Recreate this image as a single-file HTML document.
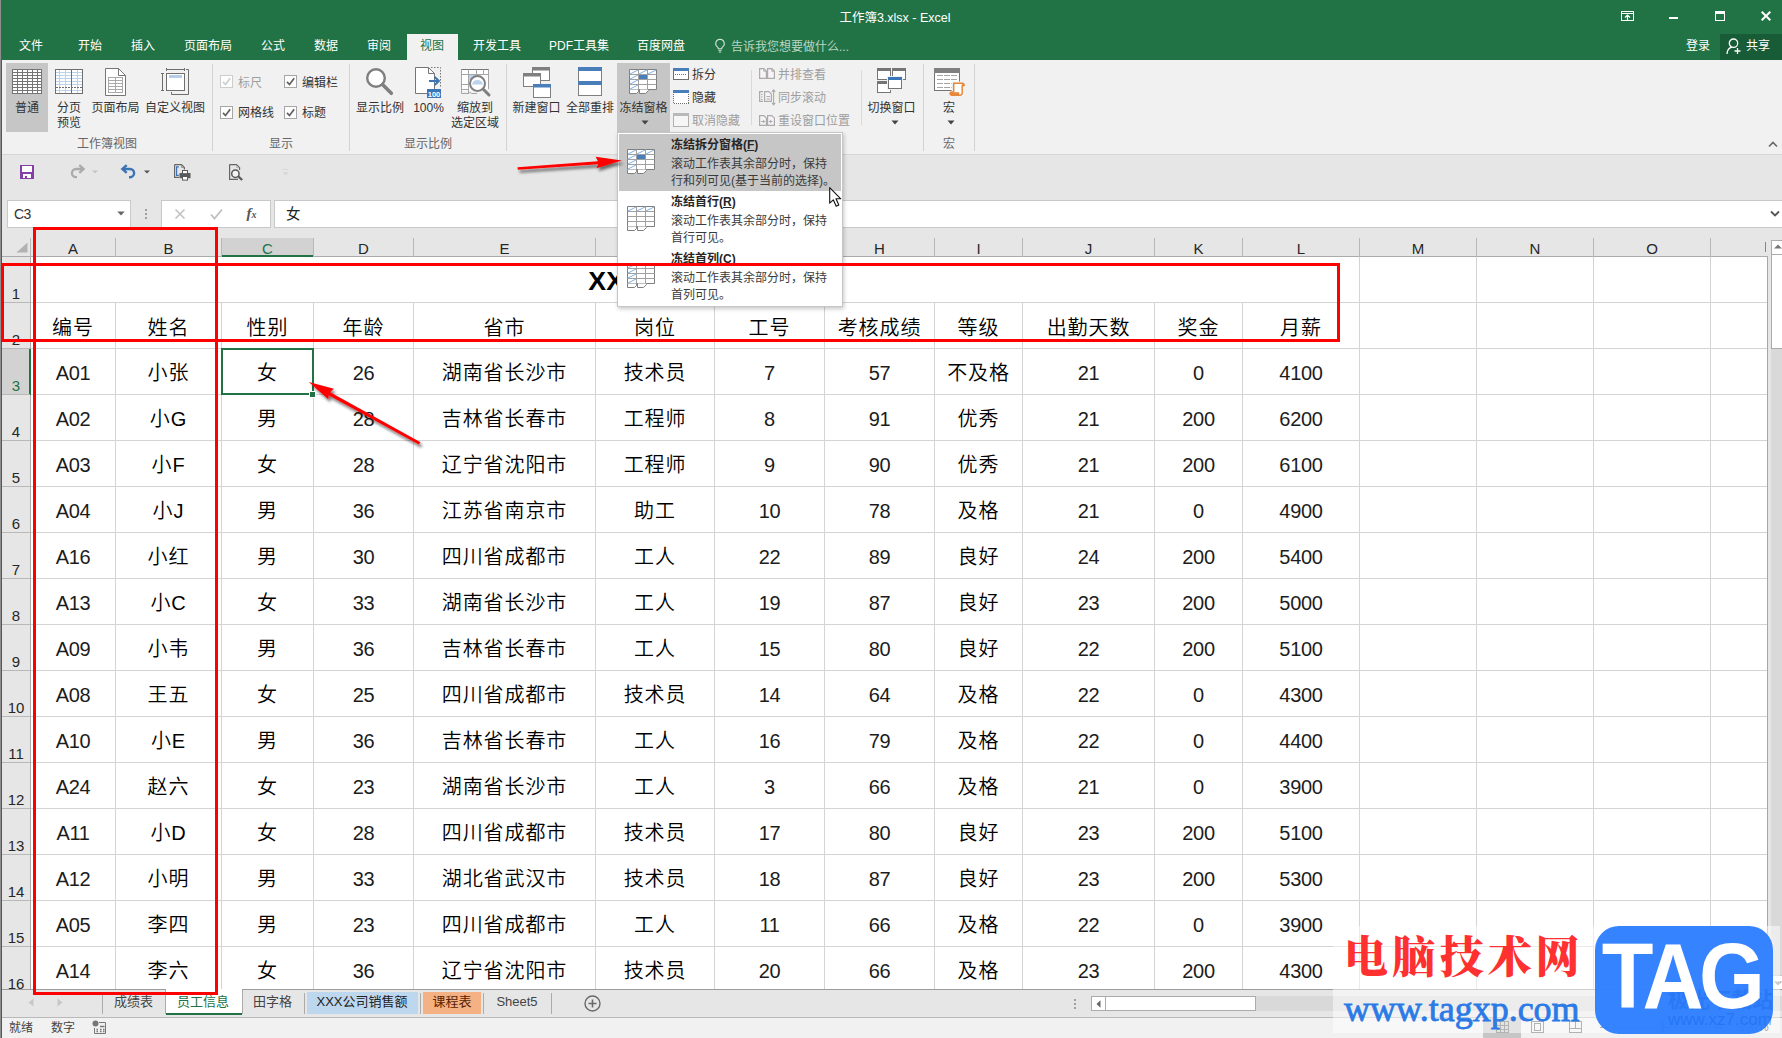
<!DOCTYPE html>
<html lang="zh-CN"><head><meta charset="utf-8"><title>Excel</title><style>
html,body{margin:0;padding:0}
body{width:1782px;height:1038px;overflow:hidden;position:relative;background:#e6e6e6;font-family:"Liberation Sans","Noto Sans CJK SC",sans-serif;font-size:12px;color:#333}
div,span,svg{position:absolute;box-sizing:border-box}
svg{overflow:visible}
.t{white-space:nowrap;line-height:16px;height:16px}
.c{text-align:center}
.w{color:#fff}
.g{color:#666}
.dis{color:#9e9e9e}
.tab{font-size:12px;color:#fff;top:37px;line-height:17px;height:17px;white-space:nowrap;text-align:center;width:100px}
.rl{font-size:12px;color:#333;white-space:nowrap;text-align:center;width:120px;line-height:15px}
.gl{font-size:12px;color:#666;white-space:nowrap;text-align:center;width:120px;line-height:15px;top:136px}
.vsep{width:1px;background:#d2d2d2;top:64px;height:87px}
.ssep{width:1px;background:#dcdcdc;top:70px;height:55px}
.cb{width:13px;height:13px;border:1px solid #8a8a8a;background:#fdfdfd}
.cbd{border-color:#c8c8c8}
.ch{font-family:"Liberation Sans","Noto Sans CJK SC",sans-serif;font-size:15px;color:#262626;text-align:center;line-height:18px;height:18px;top:239px;white-space:nowrap}
.rh{font-family:"Liberation Sans","Noto Sans CJK SC",sans-serif;font-size:15px;color:#262626;text-align:center;width:28px;left:2px;line-height:16px;height:16px;white-space:nowrap}
.cell{font-family:"Liberation Sans","Noto Sans CJK SC",sans-serif;font-size:20px;font-weight:350;color:#000;text-align:center;line-height:46px;height:46px;white-space:nowrap;letter-spacing:0.9px}
.num{letter-spacing:-0.3px;color:#1c1c1c}
.hl{height:1px;background:#d4d4d4;left:31px;width:1737px}
.vl{width:1px;background:#d4d4d4;top:257px}
.st{font-size:13px;color:#444;white-space:nowrap;line-height:16px;top:993px}
</style></head><body>
<div style="left:0px;top:0px;width:1782px;height:60px;background:#217346;"></div>
<div class="t c w" style="left:745px;top:10px;width:300px;line-height:16px;height:16px;font-size:12.5px">工作簿3.xlsx - Excel</div>
<svg style="left:1621px;top:11px" width="13" height="10" viewBox="0 0 13 10"><rect x="0.5" y="0.5" width="12" height="9" fill="none" stroke="#fff"/><path d="M0 2.5H13" stroke="#fff"/><path d="M6.5 9V4.5M4 6.5L6.5 4L9 6.5" stroke="#fff" fill="none" stroke-width="1.2"/></svg>
<div style="left:1669px;top:17px;width:9px;height:2px;background:#fff;"></div>
<svg style="left:1715px;top:11px" width="10" height="10" viewBox="0 0 10 10"><rect x="0.5" y="0.5" width="9" height="9" fill="none" stroke="#fff"/><rect x="0" y="0" width="10" height="3" fill="#fff"/></svg>
<svg style="left:1761px;top:11px" width="10" height="10" viewBox="0 0 10 10"><path d="M0.7 0.7L9.3 9.3M9.3 0.7L0.7 9.3" stroke="#fff" stroke-width="2"/></svg>
<div class="tab" style="left:-19px;top:38px;width:100px;line-height:17px;height:17px;">文件</div>
<div class="tab" style="left:40px;top:38px;width:100px;line-height:17px;height:17px;">开始</div>
<div class="tab" style="left:93px;top:38px;width:100px;line-height:17px;height:17px;">插入</div>
<div class="tab" style="left:158px;top:38px;width:100px;line-height:17px;height:17px;">页面布局</div>
<div class="tab" style="left:223px;top:38px;width:100px;line-height:17px;height:17px;">公式</div>
<div class="tab" style="left:276px;top:38px;width:100px;line-height:17px;height:17px;">数据</div>
<div class="tab" style="left:329px;top:38px;width:100px;line-height:17px;height:17px;">审阅</div>
<div style="left:407px;top:34px;width:51px;height:26px;background:#f1f1f1;"></div>
<div class="tab" style="left:382px;top:38px;width:100px;line-height:17px;height:17px;color:#217346">视图</div>
<div class="tab" style="left:447px;top:38px;width:100px;line-height:17px;height:17px;">开发工具</div>
<div class="tab" style="left:529px;top:38px;width:100px;line-height:17px;height:17px;">PDF工具集</div>
<div class="tab" style="left:611px;top:38px;width:100px;line-height:17px;height:17px;">百度网盘</div>
<svg style="left:714px;top:38px" width="12" height="16" viewBox="0 0 12 16"><path d="M6 1.2a4.3 4.3 0 0 0-2.6 7.7c.6.5.9 1.1.9 1.9h3.4c0-.8.3-1.4.9-1.9A4.3 4.3 0 0 0 6 1.2z" fill="none" stroke="#cfe3d6" stroke-width="1.1"/><path d="M4.4 12.3h3.2M4.8 14h2.4" stroke="#cfe3d6" stroke-width="1.1"/></svg>
<div class="t" style="left:731px;top:38.5px;line-height:17px;height:17px;color:#b9d5c3;font-size:12px">告诉我您想要做什么...</div>
<div class="t c w" style="left:1668px;top:38px;width:60px;line-height:16px;height:16px;">登录</div>
<div style="left:1720px;top:34px;width:62px;height:26px;background:#185c37;"></div>
<svg style="left:1726px;top:38px" width="17" height="17" viewBox="0 0 17 17"><circle cx="7.5" cy="5.2" r="4.2" fill="none" stroke="#fff" stroke-width="1.3"/><path d="M1 16c.3-4 2.5-6.3 5-6.8" fill="none" stroke="#fff" stroke-width="1.3"/><path d="M11.5 10v6M8.5 13h6" stroke="#fff" stroke-width="1.3"/></svg>
<div class="t c w" style="left:1738px;top:37.5px;width:40px;line-height:16px;height:16px;">共享</div>
<div style="left:0px;top:60px;width:1782px;height:94px;background:#f1f1f1;"></div>
<div style="left:0px;top:154px;width:1782px;height:1px;background:#d6d6d6;"></div>
<div style="left:6px;top:63px;width:42px;height:69px;background:#c6c6c6;"></div>
<svg style="left:12px;top:69px" width="30" height="25" viewBox="0 0 30 25"><g shape-rendering="crispEdges"><rect x="0" y="0" width="30" height="25" fill="#757575"/><rect x="1" y="1" width="4" height="2" fill="#fff"/><rect x="1" y="4" width="4" height="2" fill="#fff"/><rect x="1" y="7" width="4" height="2" fill="#fff"/><rect x="1" y="10" width="4" height="2" fill="#fff"/><rect x="1" y="13" width="4" height="2" fill="#fff"/><rect x="1" y="16" width="4" height="2" fill="#fff"/><rect x="1" y="19" width="4" height="2" fill="#fff"/><rect x="1" y="22" width="4" height="2" fill="#fff"/><rect x="6" y="1" width="4" height="2" fill="#fff"/><rect x="6" y="4" width="4" height="2" fill="#fff"/><rect x="6" y="7" width="4" height="2" fill="#fff"/><rect x="6" y="10" width="4" height="2" fill="#fff"/><rect x="6" y="13" width="4" height="2" fill="#fff"/><rect x="6" y="16" width="4" height="2" fill="#fff"/><rect x="6" y="19" width="4" height="2" fill="#fff"/><rect x="6" y="22" width="4" height="2" fill="#fff"/><rect x="11" y="1" width="4" height="2" fill="#fff"/><rect x="11" y="4" width="4" height="2" fill="#fff"/><rect x="11" y="7" width="4" height="2" fill="#fff"/><rect x="11" y="10" width="4" height="2" fill="#fff"/><rect x="11" y="13" width="4" height="2" fill="#fff"/><rect x="11" y="16" width="4" height="2" fill="#fff"/><rect x="11" y="19" width="4" height="2" fill="#fff"/><rect x="11" y="22" width="4" height="2" fill="#fff"/><rect x="16" y="1" width="4" height="2" fill="#fff"/><rect x="16" y="4" width="4" height="2" fill="#fff"/><rect x="16" y="7" width="4" height="2" fill="#fff"/><rect x="16" y="10" width="4" height="2" fill="#fff"/><rect x="16" y="13" width="4" height="2" fill="#fff"/><rect x="16" y="16" width="4" height="2" fill="#fff"/><rect x="16" y="19" width="4" height="2" fill="#fff"/><rect x="16" y="22" width="4" height="2" fill="#fff"/><rect x="21" y="1" width="4" height="2" fill="#fff"/><rect x="21" y="4" width="4" height="2" fill="#fff"/><rect x="21" y="7" width="4" height="2" fill="#fff"/><rect x="21" y="10" width="4" height="2" fill="#fff"/><rect x="21" y="13" width="4" height="2" fill="#fff"/><rect x="21" y="16" width="4" height="2" fill="#fff"/><rect x="21" y="19" width="4" height="2" fill="#fff"/><rect x="21" y="22" width="4" height="2" fill="#fff"/><rect x="26" y="1" width="3" height="2" fill="#fff"/><rect x="26" y="4" width="3" height="2" fill="#fff"/><rect x="26" y="7" width="3" height="2" fill="#fff"/><rect x="26" y="10" width="3" height="2" fill="#fff"/><rect x="26" y="13" width="3" height="2" fill="#fff"/><rect x="26" y="16" width="3" height="2" fill="#fff"/><rect x="26" y="19" width="3" height="2" fill="#fff"/><rect x="26" y="22" width="3" height="2" fill="#fff"/></g></svg>
<svg style="left:55px;top:69px" width="28" height="25" viewBox="0 0 28 25"><g shape-rendering="crispEdges"><rect x="0" y="0" width="28" height="25" fill="#6e6e6e"/><rect x="1" y="1" width="26" height="23" fill="#fff"/><rect x="4" y="1" width="1" height="23" fill="#bdd3ec"/><rect x="10" y="1" width="1" height="23" fill="#bdd3ec"/><rect x="22" y="1" width="1" height="23" fill="#bdd3ec"/><rect x="1" y="3" width="26" height="1" fill="#bdd3ec"/><rect x="1" y="6" width="26" height="1" fill="#bdd3ec"/><rect x="1" y="9" width="26" height="1" fill="#bdd3ec"/><rect x="1" y="12" width="26" height="1" fill="#bdd3ec"/><rect x="1" y="15" width="26" height="1" fill="#bdd3ec"/><rect x="1" y="21" width="26" height="1" fill="#bdd3ec"/><rect x="16" y="1" width="1" height="23" fill="#6e6e6e"/><rect x="1" y="18" width="2" height="1" fill="#6e6e6e"/><rect x="4" y="18" width="2" height="1" fill="#6e6e6e"/><rect x="7" y="18" width="2" height="1" fill="#6e6e6e"/><rect x="10" y="18" width="2" height="1" fill="#6e6e6e"/><rect x="13" y="18" width="2" height="1" fill="#6e6e6e"/><rect x="16" y="18" width="2" height="1" fill="#6e6e6e"/><rect x="19" y="18" width="2" height="1" fill="#6e6e6e"/><rect x="22" y="18" width="2" height="1" fill="#6e6e6e"/><rect x="25" y="18" width="2" height="1" fill="#6e6e6e"/></g></svg>
<svg style="left:105px;top:68px" width="21" height="28" viewBox="0 0 21 28"><path d="M0.5 0.5H13.5L20.5 7.5V27.5H0.5Z" fill="#fff" stroke="#757575"/><path d="M13.5 0.5V7.5H20.5" fill="none" stroke="#757575"/><g shape-rendering="crispEdges"><rect x="3" y="9" width="15" height="16" fill="#a9a9a9"/><rect x="4" y="10" width="6" height="2" fill="#fff"/><rect x="4" y="13" width="6" height="2" fill="#fff"/><rect x="4" y="16" width="6" height="2" fill="#fff"/><rect x="4" y="19" width="6" height="2" fill="#fff"/><rect x="4" y="22" width="6" height="2" fill="#fff"/><rect x="11" y="10" width="6" height="2" fill="#fff"/><rect x="11" y="13" width="6" height="2" fill="#fff"/><rect x="11" y="16" width="6" height="2" fill="#fff"/><rect x="11" y="19" width="6" height="2" fill="#fff"/><rect x="11" y="22" width="6" height="2" fill="#fff"/></g></svg>
<svg style="left:161px;top:68px" width="28" height="27" viewBox="0 0 28 27"><rect x="5.5" y="5.5" width="18" height="17" fill="#fff" stroke="#6e6e6e"/><rect x="8" y="7" width="13" height="3" fill="#b7cce6"/><path d="M5.5 1.5H23.5M5.5 0V3M23.5 0V3" stroke="#6e6e6e" fill="none"/><path d="M1.5 5.5V22.5M0 5.5H3M0 22.5H3" stroke="#6e6e6e" fill="none"/><path d="M25 1.5H27.5V26.5H10.5V24" stroke="#6e6e6e" fill="none"/></svg>
<div class="rl" style="left:-33px;top:101.3px;width:120px;line-height:15px;height:15px;">普通</div>
<div class="rl" style="left:9px;top:101.3px;width:120px;line-height:15px;height:15px;">分页</div>
<div class="rl" style="left:9px;top:116.3px;width:120px;line-height:15px;height:15px;">预览</div>
<div class="rl" style="left:55.5px;top:101.3px;width:120px;line-height:15px;height:15px;">页面布局</div>
<div class="rl" style="left:115px;top:101.3px;width:120px;line-height:15px;height:15px;">自定义视图</div>
<div class="gl" style="left:47px;top:136.7px;width:120px;line-height:15px;height:15px;">工作簿视图</div>
<div style="left:212px;top:64px;width:1px;height:87px;background:#d2d2d2;"></div>
<div class="cb" style="left:220px;top:75px;border-color:#cdcdcd"></div>
<svg style="left:220px;top:75px" width="13" height="13" viewBox="0 0 13 13"><path d="M3 6.8L5.5 9.5L10.2 3.3" fill="none" stroke="#cfcfcf" stroke-width="1.7"/></svg>
<div class="cb" style="left:284px;top:75px;border-color:#a6a6a6"></div>
<svg style="left:284px;top:75px" width="13" height="13" viewBox="0 0 13 13"><path d="M3 6.8L5.5 9.5L10.2 3.3" fill="none" stroke="#606060" stroke-width="1.7"/></svg>
<div class="cb" style="left:220px;top:106px;border-color:#a6a6a6"></div>
<svg style="left:220px;top:106px" width="13" height="13" viewBox="0 0 13 13"><path d="M3 6.8L5.5 9.5L10.2 3.3" fill="none" stroke="#606060" stroke-width="1.7"/></svg>
<div class="cb" style="left:284px;top:106px;border-color:#a6a6a6"></div>
<svg style="left:284px;top:106px" width="13" height="13" viewBox="0 0 13 13"><path d="M3 6.8L5.5 9.5L10.2 3.3" fill="none" stroke="#606060" stroke-width="1.7"/></svg>
<div class="t dis" style="left:238px;top:74.5px;line-height:16px;height:16px;">标尺</div>
<div class="t" style="left:302px;top:74.5px;line-height:16px;height:16px;">编辑栏</div>
<div class="t" style="left:238px;top:105px;line-height:16px;height:16px;">网格线</div>
<div class="t" style="left:302px;top:105px;line-height:16px;height:16px;">标题</div>
<div class="gl" style="left:221px;top:136.7px;width:120px;line-height:15px;height:15px;">显示</div>
<div style="left:349px;top:64px;width:1px;height:87px;background:#d2d2d2;"></div>
<svg style="left:365px;top:67px" width="29" height="29" viewBox="0 0 29 29"><circle cx="11" cy="11" r="8.8" fill="#fff" stroke="#7f7f7f" stroke-width="2.4"/><path d="M17.8 17.8L26.3 26.3" stroke="#7f7f7f" stroke-width="3.6" stroke-linecap="round"/></svg>
<svg style="left:414px;top:67px" width="28" height="32" viewBox="0 0 28 32"><path d="M1.5 0.5H14.5L20.5 6.5V26.5H1.5Z" fill="#fff" stroke="#757575"/><path d="M14.5 0.5V6.5H20.5" fill="none" stroke="#757575"/><path d="M17 0.5H26.5V20" fill="none" stroke="#757575" stroke-dasharray="1.5 1.5"/><path d="M20.5 19V22" stroke="#757575" stroke-dasharray="1.5 1.5"/><path d="M15 14H24.5M20.7 10L24.9 14L20.7 18" fill="none" stroke="#3a75b8" stroke-width="2"/><rect x="13" y="22" width="14" height="9" fill="#3a75b8"/><text x="20" y="29.6" font-family="Liberation Sans,sans-serif" font-size="7.5" font-weight="bold" fill="#fff" text-anchor="middle">100</text></svg>
<svg style="left:461px;top:69px" width="31" height="28" viewBox="0 0 31 28"><path d="M0.5 22V0.5H27.5V20" fill="#fff" stroke="#a6a6a6"/><path d="M0.5 0.5H27.5" stroke="#757575"/><path d="M7.5 0.5V24M15.5 0.5V6M22.5 0.5V6M0.5 5.5H27.5M0.5 15.5H8M0.5 20.5H8" fill="none" stroke="#a6a6a6"/><rect x="8" y="6" width="7" height="5" fill="#bdd3ec"/><path d="M0.5 22V24.5H8l1.2-1.4l1.2 1.4H16" fill="none" stroke="#a6a6a6"/><circle cx="16.5" cy="14.5" r="7.5" fill="#fff" stroke="#7f7f7f" stroke-width="2"/><path d="M11 15.5a5.6 5.6 0 0 1 11 0z" fill="#bdd3ec"/><path d="M22.3 20.3L28 26" stroke="#7f7f7f" stroke-width="3" stroke-linecap="round"/></svg>
<div class="rl" style="left:320px;top:101.3px;width:120px;line-height:15px;height:15px;">显示比例</div>
<div class="rl" style="left:368.5px;top:101.3px;width:120px;line-height:15px;height:15px;">100%</div>
<div class="rl" style="left:415px;top:101.3px;width:120px;line-height:15px;height:15px;">缩放到</div>
<div class="rl" style="left:415px;top:116.3px;width:120px;line-height:15px;height:15px;">选定区域</div>
<div class="gl" style="left:368px;top:136.7px;width:120px;line-height:15px;height:15px;">显示比例</div>
<div style="left:506px;top:64px;width:1px;height:87px;background:#d2d2d2;"></div>
<svg style="left:523px;top:67px" width="28" height="31" viewBox="0 0 28 31"><rect x="9.5" y="0.5" width="17" height="13" fill="#fff" stroke="#7f7f7f"/><rect x="9" y="0" width="18" height="3.5" fill="#7f7f7f"/><rect x="0.5" y="6.5" width="17" height="13" fill="#fff" stroke="#7f7f7f"/><rect x="0" y="6" width="18" height="3.5" fill="#7f7f7f"/><rect x="10.5" y="17.5" width="17" height="13" fill="#fff" stroke="#7f7f7f"/><rect x="10" y="17" width="18" height="3.5" fill="#4a7ebb"/></svg>
<svg style="left:578px;top:67px" width="24" height="29" viewBox="0 0 24 29"><rect x="0.5" y="0.5" width="23" height="28" fill="#fff" stroke="#7f7f7f"/><rect x="0" y="0" width="24" height="4" fill="#4a7ebb"/><rect x="0" y="14" width="24" height="4" fill="#4a7ebb"/></svg>
<div style="left:617px;top:63px;width:53px;height:70px;background:#c6c6c6;"></div>
<svg style="left:629px;top:69px" width="28" height="25" viewBox="0 0 28 25"><path d="M0.5 0.5H27.5V20.5H0.5Z" fill="#fff" stroke="#7f7f7f"/><path d="M0.5 20.5V24.5H7.5L9.5 22.5V20.5M10.5 20.5V24.5H16.5L19.5 21.5V20.5" fill="#fff" stroke="#7f7f7f"/><path d="M9.5 0.5V20.5M18.5 0.5V20.5M0.5 5.5H27.5M0.5 10.5H27.5M0.5 15.5H27.5" stroke="#a0a0a0" fill="none"/><path d="M1 5L9 1" stroke="#7fb0e0" stroke-width="1"/><path d="M10 5L18 1" stroke="#7fb0e0" stroke-width="1"/><path d="M19 5L27 1" stroke="#7fb0e0" stroke-width="1"/><path d="M1 10L9 6" stroke="#7fb0e0" stroke-width="1"/><path d="M1 15L9 11" stroke="#7fb0e0" stroke-width="1"/><path d="M1 20L9 16" stroke="#7fb0e0" stroke-width="1"/><rect x="10" y="6" width="8" height="4" fill="#4a7ebb"/></svg>
<div class="rl" style="left:476.5px;top:101.3px;width:120px;line-height:15px;height:15px;">新建窗口</div>
<div class="rl" style="left:530px;top:101.3px;width:120px;line-height:15px;height:15px;">全部重排</div>
<div class="rl" style="left:583.5px;top:101.3px;width:120px;line-height:15px;height:15px;">冻结窗格</div>
<svg style="left:641px;top:120px" width="8" height="5" viewBox="0 0 8 5"><path d="M0.5 0.5H7.5L4 4.5Z" fill="#444"/></svg>
<svg style="left:673px;top:68px" width="16" height="12" viewBox="0 0 16 12"><g shape-rendering="crispEdges"><rect x="0.5" y="0.5" width="15" height="11" fill="#fff" stroke="#6e6e6e"/><rect x="0" y="0" width="16" height="3" fill="#4a7ebb"/><path d="M2 6.5H14" stroke="#4a7ebb" stroke-dasharray="1 1"/></g></svg>
<svg style="left:673px;top:90px" width="16" height="14" viewBox="0 0 16 14"><g shape-rendering="crispEdges"><rect x="0.5" y="0.5" width="15" height="13" fill="#fff" stroke="#6e6e6e" stroke-dasharray="1 1"/><rect x="0" y="0" width="16" height="3" fill="#4a7ebb"/></g></svg>
<svg style="left:673px;top:113px" width="16" height="14" viewBox="0 0 16 14"><rect x="0.5" y="0.5" width="15" height="13" fill="#f6f6f6" stroke="#b0b0b0"/><rect x="0" y="0" width="16" height="3" fill="#b8b8b8"/></svg>
<div class="t" style="left:692px;top:67px;line-height:16px;height:16px;">拆分</div>
<div class="t" style="left:692px;top:89.5px;line-height:16px;height:16px;">隐藏</div>
<div class="t dis" style="left:692px;top:112.5px;line-height:16px;height:16px;">取消隐藏</div>
<div style="left:751px;top:70px;width:1px;height:55px;background:#dadada;"></div>
<svg style="left:759px;top:68px" width="17" height="12" viewBox="0 0 17 12"><path d="M0.6 0.6H4.8L7.4 3.2V10.4H0.6ZM8.6 0.6H12.8L15.4 3.2V10.4H8.6Z" fill="#f7f3f7" stroke="#ababab" stroke-width="1.2"/><path d="M4.8 0.6V3.2H7.4M12.8 0.6V3.2H15.4" fill="none" stroke="#ababab" stroke-width="1"/></svg>
<svg style="left:759px;top:89px" width="17" height="17" viewBox="0 0 17 17"><path d="M4 2.6H0.6V12.4H4" fill="none" stroke="#ababab" stroke-width="1.2"/><path d="M2 5.5H3.5M2 8H3.5M2 10.5H3.5" stroke="#ababab"/><path d="M5.6 2.6H9.8L12.4 5.2V12.4H5.6Z" fill="#f7f3f7" stroke="#ababab" stroke-width="1.2"/><path d="M7.5 7.5H11M7.5 10H11" stroke="#ababab"/><path d="M14.6 1V15.5M13 2.8L14.6 0.8L16.2 2.8M13 13.8L14.6 15.8L16.2 13.8" fill="none" stroke="#ababab" stroke-width="1.1"/></svg>
<svg style="left:759px;top:115px" width="17" height="12" viewBox="0 0 17 12"><path d="M0.6 0.6H4.8L7.4 3.2V10.4H0.6ZM8.6 0.6H12.8L15.4 3.2V10.4H8.6Z" fill="#f7f3f7" stroke="#ababab" stroke-width="1.2"/><path d="M2 6.5H5.5M4 4.8L5.7 6.5L4 8.2M10 6.5H13.5M11.7 4.8V8.2" stroke="#ababab" fill="none"/></svg>
<div class="t dis" style="left:778px;top:67px;line-height:16px;height:16px;">并排查看</div>
<div class="t dis" style="left:778px;top:90px;line-height:16px;height:16px;">同步滚动</div>
<div class="t dis" style="left:778px;top:112.5px;line-height:16px;height:16px;">重设窗口位置</div>
<div style="left:861px;top:70px;width:1px;height:55px;background:#dadada;"></div>
<svg style="left:877px;top:68px" width="29" height="25" viewBox="0 0 29 25"><rect x="0.5" y="0.5" width="13" height="11" fill="#fff" stroke="#757575"/><rect x="0" y="0" width="14" height="3" fill="#757575"/><rect x="15.5" y="0.5" width="13" height="11" fill="#fff" stroke="#757575"/><rect x="15" y="0" width="14" height="3" fill="#757575"/><rect x="0.5" y="13.5" width="13" height="11" fill="#fff" stroke="#757575"/><rect x="0" y="13" width="14" height="3" fill="#757575"/><rect x="10" y="8" width="16" height="14" fill="#f1f1f1"/><rect x="11.5" y="9.5" width="13" height="11" fill="#fff" stroke="#757575"/><rect x="11" y="9" width="14" height="3" fill="#3a75b8"/></svg>
<div class="rl" style="left:831.5px;top:101.3px;width:120px;line-height:15px;height:15px;">切换窗口</div>
<svg style="left:890.5px;top:120px" width="8" height="5" viewBox="0 0 8 5"><path d="M0.5 0.5H7.5L4 4.5Z" fill="#444"/></svg>
<div style="left:923px;top:64px;width:1px;height:87px;background:#d2d2d2;"></div>
<svg style="left:934px;top:68px" width="32" height="29" viewBox="0 0 32 29"><rect x="0.5" y="0.5" width="25" height="22" fill="#fff" stroke="#757575"/><rect x="0" y="0" width="26" height="5" fill="#808080"/><path d="M3 7.5H9" stroke="#a6a6a6"/><path d="M10 7.5H16" stroke="#a6a6a6"/><path d="M17 7.5H23" stroke="#a6a6a6"/><path d="M3 11.5H9" stroke="#a6a6a6"/><path d="M10 11.5H16" stroke="#a6a6a6"/><path d="M17 11.5H23" stroke="#a6a6a6"/><path d="M3 15.5H9" stroke="#a6a6a6"/><path d="M10 15.5H16" stroke="#a6a6a6"/><path d="M17 15.5H23" stroke="#a6a6a6"/><path d="M3 19.5H9" stroke="#a6a6a6"/><path d="M10 19.5H16" stroke="#a6a6a6"/><path d="M17 19.5H23" stroke="#a6a6a6"/><path d="M17.5 13.5H31.5V18.5H30V28.5H15.5V23.5H17.5Z" fill="#f1f1f1"/><path d="M19.7 15.2H28.2a1.9 1.9 0 0 1 1.9 1.9V17.6H28.2V25a2.2 2.2 0 0 1-2.2 2.2H17.8a1.6 1.6 0 0 1 0-3.2H19.7Z" fill="#fff" stroke="#e8873a" stroke-width="1.5" stroke-linejoin="round"/><path d="M16.4 24.2H25.2V27H17.8a1.5 1.5 0 0 1-1.4-2.8Z" fill="#e8873a"/><path d="M28.2 15.2a1.9 1.9 0 0 1 1.9 1.9V17.6H28.2Z" fill="#e8873a"/></svg>
<div class="rl" style="left:889px;top:101.3px;width:120px;line-height:15px;height:15px;">宏</div>
<svg style="left:946.5px;top:120px" width="8" height="5" viewBox="0 0 8 5"><path d="M0.5 0.5H7.5L4 4.5Z" fill="#444"/></svg>
<div class="gl" style="left:889px;top:136.7px;width:120px;line-height:15px;height:15px;">宏</div>
<div style="left:974px;top:64px;width:1px;height:87px;background:#d2d2d2;"></div>
<svg style="left:1768px;top:141px" width="10" height="7" viewBox="0 0 10 7"><path d="M1 5.5L5 1.5L9 5.5" fill="none" stroke="#666" stroke-width="1.6"/></svg>
<svg style="left:20px;top:165px" width="14" height="14" viewBox="0 0 14 14"><g shape-rendering="crispEdges"><rect x="0" y="0" width="14" height="14" fill="#8540a8"/><rect x="2" y="1" width="10" height="6" fill="#fff"/><rect x="3" y="9" width="8" height="4" fill="#fff"/><rect x="5" y="11" width="2" height="2" fill="#8540a8"/></g></svg>
<svg style="left:70px;top:164px" width="15" height="14" viewBox="0 0 15 14"><path d="M9.3 1.2L13.6 5L9.3 8.8" fill="none" stroke="#ababab" stroke-width="2.3"/><path d="M13 5H6a4.1 4.1 0 0 0 0 8.2H7" fill="none" stroke="#ababab" stroke-width="2.3"/></svg>
<svg style="left:92px;top:170px" width="6" height="4" viewBox="0 0 6 4"><path d="M0 0.5H6L3 3.5Z" fill="#c4c4c4"/></svg>
<svg style="left:121px;top:164px" width="15" height="14" viewBox="0 0 15 14"><path d="M5.7 1.2L1.4 5L5.7 8.8" fill="none" stroke="#3b73b5" stroke-width="2.4"/><path d="M2 5H9a4.1 4.1 0 0 1 0 8.2H8" fill="none" stroke="#3b73b5" stroke-width="2.4"/></svg>
<svg style="left:143.5px;top:170px" width="6" height="4" viewBox="0 0 6 4"><path d="M0 0.5H6L3 3.5Z" fill="#555"/></svg>
<svg style="left:174px;top:164px" width="17" height="17" viewBox="0 0 17 17"><path d="M0.6 0.6H7.5L10.4 3.5V5.5M0.6 0.6V13.4H5" fill="none" stroke="#666" stroke-width="1.2"/><path d="M7.5 0.6V3.5H10.4" fill="none" stroke="#888" stroke-width="0.8"/><path d="M4.8 2.8H2.6V11.3H4.8" fill="none" stroke="#3b73b5" stroke-width="1.2"/><rect x="5.5" y="9" width="11" height="5.2" fill="#5a5a5a"/><rect x="8.5" y="6.5" width="5" height="3.2" fill="#fff" stroke="#5a5a5a"/><rect x="8.5" y="12.5" width="5" height="3.6" fill="#fff" stroke="#5a5a5a"/></svg>
<svg style="left:229px;top:164px" width="15" height="17" viewBox="0 0 15 17"><path d="M0.6 0.6H7.5L10.6 3.7V6M0.6 0.6V15.4H9" fill="none" stroke="#666" stroke-width="1.2"/><path d="M7.5 0.6V3.7H10.6" fill="none" stroke="#888" stroke-width="0.8" stroke-dasharray="1 1"/><circle cx="6.4" cy="9.7" r="3.7" fill="#f4f4f4" stroke="#5a5a5a" stroke-width="1.5"/><path d="M9.2 12.4L13.2 16" stroke="#5a5a5a" stroke-width="2.3"/></svg>
<svg style="left:282px;top:169px" width="7" height="8" viewBox="0 0 7 8"><path d="M0.5 0.5H6.5" stroke="#d8d8d8"/><path d="M0.5 3H6.5L3.5 6.5Z" fill="#d8d8d8"/></svg>
<div style="left:7px;top:200px;width:124px;height:28px;background:#fff;border:1px solid #c9c9c9"></div>
<div class="t" style="left:14px;top:205px;line-height:18px;height:18px;font-size:14px;color:#333;letter-spacing:-0.5px">C3</div>
<svg style="left:117px;top:211px" width="8" height="5" viewBox="0 0 8 5"><path d="M0.3 0.5H7.7L4 4.5Z" fill="#666"/></svg>
<div style="left:145px;top:209px;width:2px;height:2px;background:#a0a0a0;"></div>
<div style="left:145px;top:213px;width:2px;height:2px;background:#a0a0a0;"></div>
<div style="left:145px;top:217px;width:2px;height:2px;background:#a0a0a0;"></div>
<div style="left:161px;top:200px;width:110px;height:28px;background:#fff;border:1px solid #c9c9c9"></div>
<svg style="left:174px;top:208px" width="12" height="12" viewBox="0 0 12 12"><path d="M1.5 1.5L10.5 10.5M10.5 1.5L1.5 10.5" stroke="#c0c0c0" stroke-width="1.5"/></svg>
<svg style="left:210px;top:208px" width="13" height="12" viewBox="0 0 13 12"><path d="M1 6.5L4.5 10.5L12 1.5" fill="none" stroke="#c0c0c0" stroke-width="1.8"/></svg>
<div class="t" style="left:246.5px;top:204px;font-family:'Liberation Serif',serif;font-style:italic;font-weight:bold;font-size:15px;color:#555;line-height:18px;height:18px">f<span style="position:static;font-size:10px">x</span></div>
<div style="left:274px;top:200px;width:1510px;height:28px;background:#fff;border:1px solid #c9c9c9"></div>
<div class="t" style="left:286px;top:204.5px;line-height:18px;height:18px;font-size:14.5px;color:#222">女</div>
<svg style="left:1770px;top:210px" width="10" height="7" viewBox="0 0 10 7"><path d="M1 1.5L5 5.5L9 1.5" fill="none" stroke="#555" stroke-width="1.8"/></svg>
<div style="left:31px;top:257px;width:1736px;height:732px;background:#fff;"></div>
<div style="left:2px;top:256px;width:1766px;height:1px;background:#ababab;"></div>
<div style="left:30px;top:238px;width:1px;height:19px;background:#b8b8b8;"></div>
<div class="ch" style="left:53px;top:239.5px;width:40px;line-height:18px;height:18px;color:#262626">A</div>
<div style="left:115px;top:238px;width:1px;height:19px;background:#b8b8b8;"></div>
<div class="ch" style="left:148.5px;top:239.5px;width:40px;line-height:18px;height:18px;color:#262626">B</div>
<div style="left:222px;top:238px;width:91px;height:18px;background:#d2d2d2;"></div>
<div style="left:222px;top:255px;width:91px;height:2px;background:#217346;"></div>
<div style="left:221px;top:238px;width:1px;height:19px;background:#b8b8b8;"></div>
<div class="ch" style="left:247.5px;top:239.5px;width:40px;line-height:18px;height:18px;color:#217346">C</div>
<div style="left:313px;top:238px;width:1px;height:19px;background:#b8b8b8;"></div>
<div class="ch" style="left:343.5px;top:239.5px;width:40px;line-height:18px;height:18px;color:#262626">D</div>
<div style="left:413px;top:238px;width:1px;height:19px;background:#b8b8b8;"></div>
<div class="ch" style="left:484.5px;top:239.5px;width:40px;line-height:18px;height:18px;color:#262626">E</div>
<div style="left:595px;top:238px;width:1px;height:19px;background:#b8b8b8;"></div>
<div class="ch" style="left:635px;top:239.5px;width:40px;line-height:18px;height:18px;color:#262626">F</div>
<div style="left:714px;top:238px;width:1px;height:19px;background:#b8b8b8;"></div>
<div class="ch" style="left:749.5px;top:239.5px;width:40px;line-height:18px;height:18px;color:#262626">G</div>
<div style="left:824px;top:238px;width:1px;height:19px;background:#b8b8b8;"></div>
<div class="ch" style="left:859.5px;top:239.5px;width:40px;line-height:18px;height:18px;color:#262626">H</div>
<div style="left:934px;top:238px;width:1px;height:19px;background:#b8b8b8;"></div>
<div class="ch" style="left:958.5px;top:239.5px;width:40px;line-height:18px;height:18px;color:#262626">I</div>
<div style="left:1022px;top:238px;width:1px;height:19px;background:#b8b8b8;"></div>
<div class="ch" style="left:1068.5px;top:239.5px;width:40px;line-height:18px;height:18px;color:#262626">J</div>
<div style="left:1154px;top:238px;width:1px;height:19px;background:#b8b8b8;"></div>
<div class="ch" style="left:1178.5px;top:239.5px;width:40px;line-height:18px;height:18px;color:#262626">K</div>
<div style="left:1242px;top:238px;width:1px;height:19px;background:#b8b8b8;"></div>
<div class="ch" style="left:1281px;top:239.5px;width:40px;line-height:18px;height:18px;color:#262626">L</div>
<div style="left:1359px;top:238px;width:1px;height:19px;background:#b8b8b8;"></div>
<div class="ch" style="left:1398px;top:239.5px;width:40px;line-height:18px;height:18px;color:#262626">M</div>
<div style="left:1476px;top:238px;width:1px;height:19px;background:#b8b8b8;"></div>
<div class="ch" style="left:1515px;top:239.5px;width:40px;line-height:18px;height:18px;color:#262626">N</div>
<div style="left:1593px;top:238px;width:1px;height:19px;background:#b8b8b8;"></div>
<div class="ch" style="left:1632px;top:239.5px;width:40px;line-height:18px;height:18px;color:#262626">O</div>
<div style="left:1710px;top:238px;width:1px;height:19px;background:#b8b8b8;"></div>
<div style="left:1765px;top:242px;width:1px;height:10px;background:#c07a20;"></div>
<svg style="left:16px;top:242px" width="12" height="11" viewBox="0 0 12 11"><path d="M11.5 0.5V10.5H0.5Z" fill="#b2b2b2"/></svg>
<div style="left:30px;top:257px;width:1px;height:732px;background:#ababab;"></div>
<div style="left:2px;top:302px;width:28px;height:1px;background:#b8b8b8;"></div>
<div class="rh" style="top:286px;color:#262626">1</div>
<div style="left:2px;top:348px;width:28px;height:1px;background:#b8b8b8;"></div>
<div class="rh" style="top:332px;color:#262626">2</div>
<div style="left:2px;top:349px;width:28px;height:45px;background:#d2d2d2;"></div>
<div style="left:29px;top:349px;width:2px;height:46px;background:#217346;"></div>
<div style="left:2px;top:394px;width:28px;height:1px;background:#b8b8b8;"></div>
<div class="rh" style="top:378px;color:#217346">3</div>
<div style="left:2px;top:440px;width:28px;height:1px;background:#b8b8b8;"></div>
<div class="rh" style="top:424px;color:#262626">4</div>
<div style="left:2px;top:486px;width:28px;height:1px;background:#b8b8b8;"></div>
<div class="rh" style="top:470px;color:#262626">5</div>
<div style="left:2px;top:532px;width:28px;height:1px;background:#b8b8b8;"></div>
<div class="rh" style="top:516px;color:#262626">6</div>
<div style="left:2px;top:578px;width:28px;height:1px;background:#b8b8b8;"></div>
<div class="rh" style="top:562px;color:#262626">7</div>
<div style="left:2px;top:624px;width:28px;height:1px;background:#b8b8b8;"></div>
<div class="rh" style="top:608px;color:#262626">8</div>
<div style="left:2px;top:670px;width:28px;height:1px;background:#b8b8b8;"></div>
<div class="rh" style="top:654px;color:#262626">9</div>
<div style="left:2px;top:716px;width:28px;height:1px;background:#b8b8b8;"></div>
<div class="rh" style="top:700px;color:#262626">10</div>
<div style="left:2px;top:762px;width:28px;height:1px;background:#b8b8b8;"></div>
<div class="rh" style="top:746px;color:#262626">11</div>
<div style="left:2px;top:808px;width:28px;height:1px;background:#b8b8b8;"></div>
<div class="rh" style="top:792px;color:#262626">12</div>
<div style="left:2px;top:854px;width:28px;height:1px;background:#b8b8b8;"></div>
<div class="rh" style="top:838px;color:#262626">13</div>
<div style="left:2px;top:900px;width:28px;height:1px;background:#b8b8b8;"></div>
<div class="rh" style="top:884px;color:#262626">14</div>
<div style="left:2px;top:946px;width:28px;height:1px;background:#b8b8b8;"></div>
<div class="rh" style="top:930px;color:#262626">15</div>
<div style="left:2px;top:992px;width:28px;height:1px;background:#b8b8b8;"></div>
<div class="rh" style="top:976px;color:#262626">16</div>
<div style="left:31px;top:302px;width:1736px;height:1px;background:#d4d4d4;"></div>
<div style="left:31px;top:348px;width:1736px;height:1px;background:#d4d4d4;"></div>
<div style="left:31px;top:394px;width:1736px;height:1px;background:#d4d4d4;"></div>
<div style="left:31px;top:440px;width:1736px;height:1px;background:#d4d4d4;"></div>
<div style="left:31px;top:486px;width:1736px;height:1px;background:#d4d4d4;"></div>
<div style="left:31px;top:532px;width:1736px;height:1px;background:#d4d4d4;"></div>
<div style="left:31px;top:578px;width:1736px;height:1px;background:#d4d4d4;"></div>
<div style="left:31px;top:624px;width:1736px;height:1px;background:#d4d4d4;"></div>
<div style="left:31px;top:670px;width:1736px;height:1px;background:#d4d4d4;"></div>
<div style="left:31px;top:716px;width:1736px;height:1px;background:#d4d4d4;"></div>
<div style="left:31px;top:762px;width:1736px;height:1px;background:#d4d4d4;"></div>
<div style="left:31px;top:808px;width:1736px;height:1px;background:#d4d4d4;"></div>
<div style="left:31px;top:854px;width:1736px;height:1px;background:#d4d4d4;"></div>
<div style="left:31px;top:900px;width:1736px;height:1px;background:#d4d4d4;"></div>
<div style="left:31px;top:946px;width:1736px;height:1px;background:#d4d4d4;"></div>
<div style="left:115px;top:303px;width:1px;height:686px;background:#d4d4d4;"></div>
<div style="left:221px;top:303px;width:1px;height:686px;background:#d4d4d4;"></div>
<div style="left:313px;top:303px;width:1px;height:686px;background:#d4d4d4;"></div>
<div style="left:413px;top:303px;width:1px;height:686px;background:#d4d4d4;"></div>
<div style="left:595px;top:303px;width:1px;height:686px;background:#d4d4d4;"></div>
<div style="left:714px;top:303px;width:1px;height:686px;background:#d4d4d4;"></div>
<div style="left:824px;top:303px;width:1px;height:686px;background:#d4d4d4;"></div>
<div style="left:934px;top:303px;width:1px;height:686px;background:#d4d4d4;"></div>
<div style="left:1022px;top:303px;width:1px;height:686px;background:#d4d4d4;"></div>
<div style="left:1154px;top:303px;width:1px;height:686px;background:#d4d4d4;"></div>
<div style="left:1242px;top:303px;width:1px;height:686px;background:#d4d4d4;"></div>
<div style="left:1359px;top:257px;width:1px;height:732px;background:#d4d4d4;"></div>
<div style="left:1476px;top:257px;width:1px;height:732px;background:#d4d4d4;"></div>
<div style="left:1593px;top:257px;width:1px;height:732px;background:#d4d4d4;"></div>
<div style="left:1710px;top:257px;width:1px;height:732px;background:#d4d4d4;"></div>
<div style="left:1767px;top:257px;width:1px;height:732px;background:#a6a6a6;"></div>
<div class="cell" style="left:31px;top:258px;width:1328px;font-size:26.67px;font-weight:bold;color:#000;line-height:46px;letter-spacing:0">XXX公司员工信息</div>
<div class="cell" style="left:31px;top:305px;width:84px;">编号</div>
<div class="cell" style="left:116px;top:305px;width:105px;">姓名</div>
<div class="cell" style="left:222px;top:305px;width:91px;">性别</div>
<div class="cell" style="left:314px;top:305px;width:99px;">年龄</div>
<div class="cell" style="left:414px;top:305px;width:181px;">省市</div>
<div class="cell" style="left:596px;top:305px;width:118px;">岗位</div>
<div class="cell" style="left:715px;top:305px;width:109px;">工号</div>
<div class="cell" style="left:825px;top:305px;width:109px;">考核成绩</div>
<div class="cell" style="left:935px;top:305px;width:87px;">等级</div>
<div class="cell" style="left:1023px;top:305px;width:131px;">出勤天数</div>
<div class="cell" style="left:1155px;top:305px;width:87px;">奖金</div>
<div class="cell" style="left:1243px;top:305px;width:116px;">月薪</div>
<div class="cell num" style="left:31px;top:350px;width:84px;">A01</div>
<div class="cell" style="left:116px;top:350px;width:105px;">小张</div>
<div class="cell" style="left:222px;top:350px;width:91px;">女</div>
<div class="cell num" style="left:314px;top:350px;width:99px;">26</div>
<div class="cell" style="left:414px;top:350px;width:181px;">湖南省长沙市</div>
<div class="cell" style="left:596px;top:350px;width:118px;">技术员</div>
<div class="cell num" style="left:715px;top:350px;width:109px;">7</div>
<div class="cell num" style="left:825px;top:350px;width:109px;">57</div>
<div class="cell" style="left:935px;top:350px;width:87px;">不及格</div>
<div class="cell num" style="left:1023px;top:350px;width:131px;">21</div>
<div class="cell num" style="left:1155px;top:350px;width:87px;">0</div>
<div class="cell num" style="left:1243px;top:350px;width:116px;">4100</div>
<div class="cell num" style="left:31px;top:396px;width:84px;">A02</div>
<div class="cell" style="left:116px;top:396px;width:105px;">小G</div>
<div class="cell" style="left:222px;top:396px;width:91px;">男</div>
<div class="cell num" style="left:314px;top:396px;width:99px;">28</div>
<div class="cell" style="left:414px;top:396px;width:181px;">吉林省长春市</div>
<div class="cell" style="left:596px;top:396px;width:118px;">工程师</div>
<div class="cell num" style="left:715px;top:396px;width:109px;">8</div>
<div class="cell num" style="left:825px;top:396px;width:109px;">91</div>
<div class="cell" style="left:935px;top:396px;width:87px;">优秀</div>
<div class="cell num" style="left:1023px;top:396px;width:131px;">21</div>
<div class="cell num" style="left:1155px;top:396px;width:87px;">200</div>
<div class="cell num" style="left:1243px;top:396px;width:116px;">6200</div>
<div class="cell num" style="left:31px;top:442px;width:84px;">A03</div>
<div class="cell" style="left:116px;top:442px;width:105px;">小F</div>
<div class="cell" style="left:222px;top:442px;width:91px;">女</div>
<div class="cell num" style="left:314px;top:442px;width:99px;">28</div>
<div class="cell" style="left:414px;top:442px;width:181px;">辽宁省沈阳市</div>
<div class="cell" style="left:596px;top:442px;width:118px;">工程师</div>
<div class="cell num" style="left:715px;top:442px;width:109px;">9</div>
<div class="cell num" style="left:825px;top:442px;width:109px;">90</div>
<div class="cell" style="left:935px;top:442px;width:87px;">优秀</div>
<div class="cell num" style="left:1023px;top:442px;width:131px;">21</div>
<div class="cell num" style="left:1155px;top:442px;width:87px;">200</div>
<div class="cell num" style="left:1243px;top:442px;width:116px;">6100</div>
<div class="cell num" style="left:31px;top:488px;width:84px;">A04</div>
<div class="cell" style="left:116px;top:488px;width:105px;">小J</div>
<div class="cell" style="left:222px;top:488px;width:91px;">男</div>
<div class="cell num" style="left:314px;top:488px;width:99px;">36</div>
<div class="cell" style="left:414px;top:488px;width:181px;">江苏省南京市</div>
<div class="cell" style="left:596px;top:488px;width:118px;">助工</div>
<div class="cell num" style="left:715px;top:488px;width:109px;">10</div>
<div class="cell num" style="left:825px;top:488px;width:109px;">78</div>
<div class="cell" style="left:935px;top:488px;width:87px;">及格</div>
<div class="cell num" style="left:1023px;top:488px;width:131px;">21</div>
<div class="cell num" style="left:1155px;top:488px;width:87px;">0</div>
<div class="cell num" style="left:1243px;top:488px;width:116px;">4900</div>
<div class="cell num" style="left:31px;top:534px;width:84px;">A16</div>
<div class="cell" style="left:116px;top:534px;width:105px;">小红</div>
<div class="cell" style="left:222px;top:534px;width:91px;">男</div>
<div class="cell num" style="left:314px;top:534px;width:99px;">30</div>
<div class="cell" style="left:414px;top:534px;width:181px;">四川省成都市</div>
<div class="cell" style="left:596px;top:534px;width:118px;">工人</div>
<div class="cell num" style="left:715px;top:534px;width:109px;">22</div>
<div class="cell num" style="left:825px;top:534px;width:109px;">89</div>
<div class="cell" style="left:935px;top:534px;width:87px;">良好</div>
<div class="cell num" style="left:1023px;top:534px;width:131px;">24</div>
<div class="cell num" style="left:1155px;top:534px;width:87px;">200</div>
<div class="cell num" style="left:1243px;top:534px;width:116px;">5400</div>
<div class="cell num" style="left:31px;top:580px;width:84px;">A13</div>
<div class="cell" style="left:116px;top:580px;width:105px;">小C</div>
<div class="cell" style="left:222px;top:580px;width:91px;">女</div>
<div class="cell num" style="left:314px;top:580px;width:99px;">33</div>
<div class="cell" style="left:414px;top:580px;width:181px;">湖南省长沙市</div>
<div class="cell" style="left:596px;top:580px;width:118px;">工人</div>
<div class="cell num" style="left:715px;top:580px;width:109px;">19</div>
<div class="cell num" style="left:825px;top:580px;width:109px;">87</div>
<div class="cell" style="left:935px;top:580px;width:87px;">良好</div>
<div class="cell num" style="left:1023px;top:580px;width:131px;">23</div>
<div class="cell num" style="left:1155px;top:580px;width:87px;">200</div>
<div class="cell num" style="left:1243px;top:580px;width:116px;">5000</div>
<div class="cell num" style="left:31px;top:626px;width:84px;">A09</div>
<div class="cell" style="left:116px;top:626px;width:105px;">小韦</div>
<div class="cell" style="left:222px;top:626px;width:91px;">男</div>
<div class="cell num" style="left:314px;top:626px;width:99px;">36</div>
<div class="cell" style="left:414px;top:626px;width:181px;">吉林省长春市</div>
<div class="cell" style="left:596px;top:626px;width:118px;">工人</div>
<div class="cell num" style="left:715px;top:626px;width:109px;">15</div>
<div class="cell num" style="left:825px;top:626px;width:109px;">80</div>
<div class="cell" style="left:935px;top:626px;width:87px;">良好</div>
<div class="cell num" style="left:1023px;top:626px;width:131px;">22</div>
<div class="cell num" style="left:1155px;top:626px;width:87px;">200</div>
<div class="cell num" style="left:1243px;top:626px;width:116px;">5100</div>
<div class="cell num" style="left:31px;top:672px;width:84px;">A08</div>
<div class="cell" style="left:116px;top:672px;width:105px;">王五</div>
<div class="cell" style="left:222px;top:672px;width:91px;">女</div>
<div class="cell num" style="left:314px;top:672px;width:99px;">25</div>
<div class="cell" style="left:414px;top:672px;width:181px;">四川省成都市</div>
<div class="cell" style="left:596px;top:672px;width:118px;">技术员</div>
<div class="cell num" style="left:715px;top:672px;width:109px;">14</div>
<div class="cell num" style="left:825px;top:672px;width:109px;">64</div>
<div class="cell" style="left:935px;top:672px;width:87px;">及格</div>
<div class="cell num" style="left:1023px;top:672px;width:131px;">22</div>
<div class="cell num" style="left:1155px;top:672px;width:87px;">0</div>
<div class="cell num" style="left:1243px;top:672px;width:116px;">4300</div>
<div class="cell num" style="left:31px;top:718px;width:84px;">A10</div>
<div class="cell" style="left:116px;top:718px;width:105px;">小E</div>
<div class="cell" style="left:222px;top:718px;width:91px;">男</div>
<div class="cell num" style="left:314px;top:718px;width:99px;">36</div>
<div class="cell" style="left:414px;top:718px;width:181px;">吉林省长春市</div>
<div class="cell" style="left:596px;top:718px;width:118px;">工人</div>
<div class="cell num" style="left:715px;top:718px;width:109px;">16</div>
<div class="cell num" style="left:825px;top:718px;width:109px;">79</div>
<div class="cell" style="left:935px;top:718px;width:87px;">及格</div>
<div class="cell num" style="left:1023px;top:718px;width:131px;">22</div>
<div class="cell num" style="left:1155px;top:718px;width:87px;">0</div>
<div class="cell num" style="left:1243px;top:718px;width:116px;">4400</div>
<div class="cell num" style="left:31px;top:764px;width:84px;">A24</div>
<div class="cell" style="left:116px;top:764px;width:105px;">赵六</div>
<div class="cell" style="left:222px;top:764px;width:91px;">女</div>
<div class="cell num" style="left:314px;top:764px;width:99px;">23</div>
<div class="cell" style="left:414px;top:764px;width:181px;">湖南省长沙市</div>
<div class="cell" style="left:596px;top:764px;width:118px;">工人</div>
<div class="cell num" style="left:715px;top:764px;width:109px;">3</div>
<div class="cell num" style="left:825px;top:764px;width:109px;">66</div>
<div class="cell" style="left:935px;top:764px;width:87px;">及格</div>
<div class="cell num" style="left:1023px;top:764px;width:131px;">21</div>
<div class="cell num" style="left:1155px;top:764px;width:87px;">0</div>
<div class="cell num" style="left:1243px;top:764px;width:116px;">3900</div>
<div class="cell num" style="left:31px;top:810px;width:84px;">A11</div>
<div class="cell" style="left:116px;top:810px;width:105px;">小D</div>
<div class="cell" style="left:222px;top:810px;width:91px;">女</div>
<div class="cell num" style="left:314px;top:810px;width:99px;">28</div>
<div class="cell" style="left:414px;top:810px;width:181px;">四川省成都市</div>
<div class="cell" style="left:596px;top:810px;width:118px;">技术员</div>
<div class="cell num" style="left:715px;top:810px;width:109px;">17</div>
<div class="cell num" style="left:825px;top:810px;width:109px;">80</div>
<div class="cell" style="left:935px;top:810px;width:87px;">良好</div>
<div class="cell num" style="left:1023px;top:810px;width:131px;">23</div>
<div class="cell num" style="left:1155px;top:810px;width:87px;">200</div>
<div class="cell num" style="left:1243px;top:810px;width:116px;">5100</div>
<div class="cell num" style="left:31px;top:856px;width:84px;">A12</div>
<div class="cell" style="left:116px;top:856px;width:105px;">小明</div>
<div class="cell" style="left:222px;top:856px;width:91px;">男</div>
<div class="cell num" style="left:314px;top:856px;width:99px;">33</div>
<div class="cell" style="left:414px;top:856px;width:181px;">湖北省武汉市</div>
<div class="cell" style="left:596px;top:856px;width:118px;">技术员</div>
<div class="cell num" style="left:715px;top:856px;width:109px;">18</div>
<div class="cell num" style="left:825px;top:856px;width:109px;">87</div>
<div class="cell" style="left:935px;top:856px;width:87px;">良好</div>
<div class="cell num" style="left:1023px;top:856px;width:131px;">23</div>
<div class="cell num" style="left:1155px;top:856px;width:87px;">200</div>
<div class="cell num" style="left:1243px;top:856px;width:116px;">5300</div>
<div class="cell num" style="left:31px;top:902px;width:84px;">A05</div>
<div class="cell" style="left:116px;top:902px;width:105px;">李四</div>
<div class="cell" style="left:222px;top:902px;width:91px;">男</div>
<div class="cell num" style="left:314px;top:902px;width:99px;">23</div>
<div class="cell" style="left:414px;top:902px;width:181px;">四川省成都市</div>
<div class="cell" style="left:596px;top:902px;width:118px;">工人</div>
<div class="cell num" style="left:715px;top:902px;width:109px;">11</div>
<div class="cell num" style="left:825px;top:902px;width:109px;">66</div>
<div class="cell" style="left:935px;top:902px;width:87px;">及格</div>
<div class="cell num" style="left:1023px;top:902px;width:131px;">22</div>
<div class="cell num" style="left:1155px;top:902px;width:87px;">0</div>
<div class="cell num" style="left:1243px;top:902px;width:116px;">3900</div>
<div class="cell num" style="left:31px;top:948px;width:84px;height:41px;overflow:hidden;">A14</div>
<div class="cell" style="left:116px;top:948px;width:105px;height:41px;overflow:hidden;">李六</div>
<div class="cell" style="left:222px;top:948px;width:91px;height:41px;overflow:hidden;">女</div>
<div class="cell num" style="left:314px;top:948px;width:99px;height:41px;overflow:hidden;">36</div>
<div class="cell" style="left:414px;top:948px;width:181px;height:41px;overflow:hidden;">辽宁省沈阳市</div>
<div class="cell" style="left:596px;top:948px;width:118px;height:41px;overflow:hidden;">技术员</div>
<div class="cell num" style="left:715px;top:948px;width:109px;height:41px;overflow:hidden;">20</div>
<div class="cell num" style="left:825px;top:948px;width:109px;height:41px;overflow:hidden;">66</div>
<div class="cell" style="left:935px;top:948px;width:87px;height:41px;overflow:hidden;">及格</div>
<div class="cell num" style="left:1023px;top:948px;width:131px;height:41px;overflow:hidden;">23</div>
<div class="cell num" style="left:1155px;top:948px;width:87px;height:41px;overflow:hidden;">200</div>
<div class="cell num" style="left:1243px;top:948px;width:116px;height:41px;overflow:hidden;">4300</div>
<div style="left:221px;top:348px;width:93px;height:47px;border:2px solid #217346"></div>
<div style="left:309px;top:391px;width:7px;height:7px;background:#fff;"></div>
<div style="left:310px;top:392px;width:5px;height:5px;background:#217346;"></div>
<div style="left:1768px;top:228px;width:14px;height:761px;background:#e6e6e6;"></div>
<div style="left:1771px;top:240px;width:12px;height:15px;background:#fff;border:1px solid #ababab"></div>
<svg style="left:1774px;top:244px" width="8" height="5" viewBox="0 0 8 5"><path d="M0 4.5L4 0.5L8 4.5Z" fill="#777"/></svg>
<div style="left:1771px;top:254px;width:12px;height:95px;background:#fff;border:1px solid #ababab"></div>
<div style="left:1771px;top:349px;width:11px;height:626px;background:#d9d9d9;"></div>
<div style="left:1771px;top:975px;width:12px;height:15px;background:#fff;border:1px solid #c6c6c6"></div>
<svg style="left:1774px;top:981px" width="8" height="5" viewBox="0 0 8 5"><path d="M0 0.5L4 4.5L8 0.5Z" fill="#999"/></svg>
<div style="left:0px;top:989px;width:1782px;height:1px;background:#9c9c9c;"></div>
<div style="left:0px;top:990px;width:1782px;height:27px;background:#e6e6e6;"></div>
<svg style="left:28px;top:998px" width="6" height="9" viewBox="0 0 6 9"><path d="M5.5 0.5V8.5L0.5 4.5Z" fill="#c8c8c8"/></svg>
<svg style="left:57px;top:998px" width="6" height="9" viewBox="0 0 6 9"><path d="M0.5 0.5V8.5L5.5 4.5Z" fill="#c8c8c8"/></svg>
<div style="left:102px;top:993px;width:1px;height:21px;background:#ababab;"></div>
<div class="st c" style="left:93.5px;top:994px;width:80px;line-height:16px;height:16px;">成绩表</div>
<div style="left:166px;top:989px;width:76px;height:25px;background:#fff;"></div>
<div style="left:165px;top:990px;width:1px;height:24px;background:#ababab;"></div>
<div style="left:242px;top:990px;width:1px;height:24px;background:#ababab;"></div>
<div style="left:166px;top:1013px;width:76px;height:2px;background:#217346;"></div>
<div class="st c" style="left:163px;top:994px;width:80px;line-height:16px;height:16px;color:#217346">员工信息</div>
<div class="st c" style="left:232.5px;top:994px;width:80px;line-height:16px;height:16px;">田字格</div>
<div style="left:304px;top:993px;width:1px;height:21px;background:#ababab;"></div>
<div style="left:307px;top:992px;width:111px;height:22px;background:#bdd7ee;"></div>
<div class="st c" style="left:302px;top:994px;width:120px;line-height:16px;height:16px;color:#222">XXX公司销售额</div>
<div style="left:420px;top:993px;width:1px;height:21px;background:#ababab;"></div>
<div style="left:423px;top:992px;width:58px;height:22px;background:#f4b183;"></div>
<div class="st c" style="left:412px;top:994px;width:80px;line-height:16px;height:16px;color:#5a1e00">课程表</div>
<div style="left:483px;top:993px;width:1px;height:21px;background:#ababab;"></div>
<div class="st c" style="left:477px;top:994px;width:80px;line-height:16px;height:16px;">Sheet5</div>
<div style="left:551px;top:993px;width:1px;height:21px;background:#ababab;"></div>
<svg style="left:584px;top:995px" width="17" height="17" viewBox="0 0 17 17"><circle cx="8.5" cy="8.5" r="7.5" fill="none" stroke="#6a6a6a" stroke-width="1.4"/><path d="M8.5 4.5V12.5M4.5 8.5H12.5" stroke="#6a6a6a" stroke-width="1.6"/></svg>
<div style="left:1074px;top:999px;width:2px;height:2px;background:#a0a0a0;"></div>
<div style="left:1074px;top:1003px;width:2px;height:2px;background:#a0a0a0;"></div>
<div style="left:1074px;top:1007px;width:2px;height:2px;background:#a0a0a0;"></div>
<div style="left:1091px;top:996px;width:691px;height:15px;background:#d9d9d9;"></div>
<div style="left:1091px;top:996px;width:15px;height:15px;background:#fff;border:1px solid #ababab"></div>
<svg style="left:1096px;top:1000px" width="5" height="8" viewBox="0 0 5 8"><path d="M4.5 0.2V7.8L0.5 4Z" fill="#666"/></svg>
<div style="left:1105px;top:996px;width:151px;height:15px;background:#fff;border:1px solid #ababab"></div>
<div style="left:0px;top:1017px;width:1782px;height:1px;background:#b9b9b9;"></div>
<div style="left:0px;top:1018px;width:1782px;height:20px;background:#f1f1f1;"></div>
<div class="t" style="left:9px;top:1019.5px;line-height:16px;height:16px;color:#444">就绪</div>
<div class="t" style="left:51px;top:1019.5px;line-height:16px;height:16px;color:#444">数字</div>
<svg style="left:92px;top:1020px" width="14" height="14" viewBox="0 0 14 14"><circle cx="3.5" cy="3.5" r="3" fill="#777"/><path d="M7 2.5H13.5V13.5H2.5V8" fill="none" stroke="#777"/><path d="M4.5 9.5H6M8 9.5H9.5M11 9.5H12.5M4.5 11.5H6M8 11.5H9.5M11 11.5H12.5M8 6.5H12.5" stroke="#777" stroke-width="1.4"/></svg>
<div style="left:1483px;top:1018px;width:38px;height:20px;background:#c6c6c6;"></div>
<svg style="left:1496px;top:1021px" width="13" height="12" viewBox="0 0 13 12"><rect x="0.5" y="0.5" width="12" height="11" fill="none" stroke="#666"/><path d="M4.5 0.5V11.5M8.5 0.5V11.5M0.5 4.5H12.5M0.5 8.5H12.5" stroke="#666"/></svg>
<svg style="left:1531px;top:1021px" width="13" height="12" viewBox="0 0 13 12"><rect x="0.5" y="0.5" width="12" height="11" fill="none" stroke="#666"/><rect x="3.5" y="2.5" width="6" height="7" fill="none" stroke="#666"/></svg>
<svg style="left:1569px;top:1021px" width="13" height="12" viewBox="0 0 13 12"><rect x="0.5" y="0.5" width="12" height="11" fill="none" stroke="#666"/><path d="M6.5 0.5V7.5M0.5 7.5H12.5" stroke="#666"/></svg>
<div style="left:1600px;top:1027px;width:8px;height:1px;background:#555;"></div>
<div style="left:1612px;top:1027px;width:100px;height:1px;background:#888;"></div>
<div style="left:1661px;top:1021px;width:3px;height:12px;background:#555;"></div>
<div style="left:1713px;top:1027px;width:9px;height:1px;background:#555;"></div>
<div style="left:1717px;top:1023px;width:1px;height:9px;background:#555;"></div>
<div class="t" style="left:1738px;top:1019px;line-height:16px;height:16px;color:#444">100%</div>
<div style="left:0px;top:0px;width:1px;height:1038px;background:#8f8f8f;"></div>
<div style="left:1px;top:60px;width:1px;height:978px;background:#217346;"></div>
<div style="left:617px;top:132px;width:226px;height:175px;background:#fff;border:1px solid #c6c6c6;box-shadow:1px 2px 4px rgba(0,0,0,.22)"></div>
<div style="left:619px;top:134px;width:222px;height:57px;background:#c6c6c6;"></div>
<div class="t" style="left:671px;top:136.6px;line-height:16px;height:16px;font-weight:bold;color:#262626">冻结拆分窗格(<u>F</u>)</div>
<div class="t" style="left:671px;top:156px;line-height:16px;height:16px;color:#3b3b3b">滚动工作表其余部分时，保持</div>
<div class="t" style="left:671px;top:172.5px;line-height:16px;height:16px;color:#3b3b3b">行和列可见(基于当前的选择)。</div>
<svg style="left:627px;top:149px" width="28" height="25" viewBox="0 0 28 25"><path d="M0.5 0.5H27.5V20.5H0.5Z" fill="#fff" stroke="#7f7f7f"/><path d="M0.5 20.5V24.5H7.5L9.5 22.5V20.5M10.5 20.5V24.5H16.5L19.5 21.5V20.5" fill="#fff" stroke="#7f7f7f"/><path d="M9.5 0.5V20.5M18.5 0.5V20.5M0.5 5.5H27.5M0.5 10.5H27.5M0.5 15.5H27.5" stroke="#a0a0a0" fill="none"/><path d="M1 5L9 1" stroke="#7fb0e0" stroke-width="1"/><path d="M10 5L18 1" stroke="#7fb0e0" stroke-width="1"/><path d="M19 5L27 1" stroke="#7fb0e0" stroke-width="1"/><path d="M1 10L9 6" stroke="#7fb0e0" stroke-width="1"/><path d="M1 15L9 11" stroke="#7fb0e0" stroke-width="1"/><path d="M1 20L9 16" stroke="#7fb0e0" stroke-width="1"/><rect x="10" y="6" width="8" height="4" fill="#4a7ebb"/></svg>
<div class="t" style="left:671px;top:193.6px;line-height:16px;height:16px;font-weight:bold;color:#262626">冻结首行(<u>R</u>)</div>
<div class="t" style="left:671px;top:213px;line-height:16px;height:16px;color:#3b3b3b">滚动工作表其余部分时，保持</div>
<div class="t" style="left:671px;top:229.5px;line-height:16px;height:16px;color:#3b3b3b">首行可见。</div>
<svg style="left:627px;top:206px" width="28" height="25" viewBox="0 0 28 25"><path d="M0.5 0.5H27.5V20.5H0.5Z" fill="#fff" stroke="#7f7f7f"/><path d="M0.5 20.5V24.5H7.5L9.5 22.5V20.5M10.5 20.5V24.5H16.5L19.5 21.5V20.5" fill="#fff" stroke="#7f7f7f"/><path d="M9.5 0.5V20.5M18.5 0.5V20.5M0.5 5.5H27.5M0.5 10.5H27.5M0.5 15.5H27.5" stroke="#a0a0a0" fill="none"/><path d="M1 5L9 1" stroke="#7fb0e0" stroke-width="1"/><path d="M10 5L18 1" stroke="#7fb0e0" stroke-width="1"/><path d="M19 5L27 1" stroke="#7fb0e0" stroke-width="1"/></svg>
<div class="t" style="left:671px;top:250.6px;line-height:16px;height:16px;font-weight:bold;color:#262626">冻结首列(<u>C</u>)</div>
<div class="t" style="left:671px;top:270px;line-height:16px;height:16px;color:#3b3b3b">滚动工作表其余部分时，保持</div>
<div class="t" style="left:671px;top:286.5px;line-height:16px;height:16px;color:#3b3b3b">首列可见。</div>
<svg style="left:627px;top:263px" width="28" height="25" viewBox="0 0 28 25"><path d="M0.5 0.5H27.5V20.5H0.5Z" fill="#fff" stroke="#7f7f7f"/><path d="M0.5 20.5V24.5H7.5L9.5 22.5V20.5M10.5 20.5V24.5H16.5L19.5 21.5V20.5" fill="#fff" stroke="#7f7f7f"/><path d="M9.5 0.5V20.5M18.5 0.5V20.5M0.5 5.5H27.5M0.5 10.5H27.5M0.5 15.5H27.5" stroke="#a0a0a0" fill="none"/><path d="M1 10L9 6" stroke="#7fb0e0" stroke-width="1"/><path d="M1 15L9 11" stroke="#7fb0e0" stroke-width="1"/><path d="M1 20L9 16" stroke="#7fb0e0" stroke-width="1"/><path d="M1 5L9 1" stroke="#7fb0e0" stroke-width="1"/></svg>
<div style="left:33px;top:227px;width:185px;height:768px;border:3px solid #ff0000"></div>
<div style="left:1px;top:263px;width:1339px;height:79px;border:3px solid #ff0000"></div>
<svg style="left:0;top:0" width="1782" height="1038" viewBox="0 0 1782 1038"><defs><filter id="sh" x="-20%" y="-20%" width="140%" height="160%"><feGaussianBlur in="SourceAlpha" stdDeviation="1.6"/><feOffset dx="1.5" dy="3"/><feComponentTransfer><feFuncA type="linear" slope="0.55"/></feComponentTransfer><feMerge><feMergeNode/><feMergeNode in="SourceGraphic"/></feMerge></filter></defs><g filter="url(#sh)" fill="#ff0000"><path d="M517.5 167.2L598 161.2L595.6 156.8L622 160.5L596.3 168.2L598.3 164.3L517.8 169.8Z"/><path d="M308.8 382L333.8 388.8L330.2 392.2L420.5 442.3L418.8 444.6L328.6 395.2L328.3 399.3Z"/></g></svg>
<svg style="left:829px;top:187px" width="13" height="20" viewBox="0 0 13 20"><path d="M0.7 0.7V16.2L4.3 12.8L7.2 19.2L9.8 18L7 11.8H11.8Z" fill="#fff" stroke="#111" stroke-width="1.1" stroke-linejoin="round"/></svg>
<div style="left:1333px;top:926px;width:447px;height:107px;background:rgba(255,255,255,.5);"></div>
<div style="left:1344px;top:931px;width:240px;height:56px;line-height:56px;font-family:'Liberation Serif','Noto Serif CJK SC',serif;font-weight:900;font-size:44px;color:#ff3030;white-space:nowrap;letter-spacing:3.9px">电脑技术网</div>
<div style="left:1344px;top:987px;width:250px;height:44px;line-height:44px;font-family:'Liberation Serif',serif;font-size:36px;color:#2b7ae6;white-space:nowrap;-webkit-text-stroke:0.8px #2b7ae6">www.tagxp.com</div>
<div style="left:1595px;top:926px;width:178px;height:108px;background:rgba(45,126,255,.96);border-radius:24px"></div>
<div style="left:1668px;top:988px;width:110px;height:24px;line-height:24px;font-size:21px;font-weight:bold;color:rgba(20,100,230,.35);white-space:nowrap">极光下载站</div>
<div style="left:1668px;top:1010px;width:110px;height:20px;line-height:20px;font-size:17px;color:rgba(20,100,230,.45);white-space:nowrap">www.xz7.com</div>
<div style="left:1592px;top:924px;width:178px;height:108px;line-height:104px;text-align:center;font-family:'Liberation Sans',sans-serif;font-weight:bold;font-size:92px;color:#fff;white-space:nowrap;letter-spacing:-5px;transform:scaleX(.92)">TAG</div>
</body></html>
